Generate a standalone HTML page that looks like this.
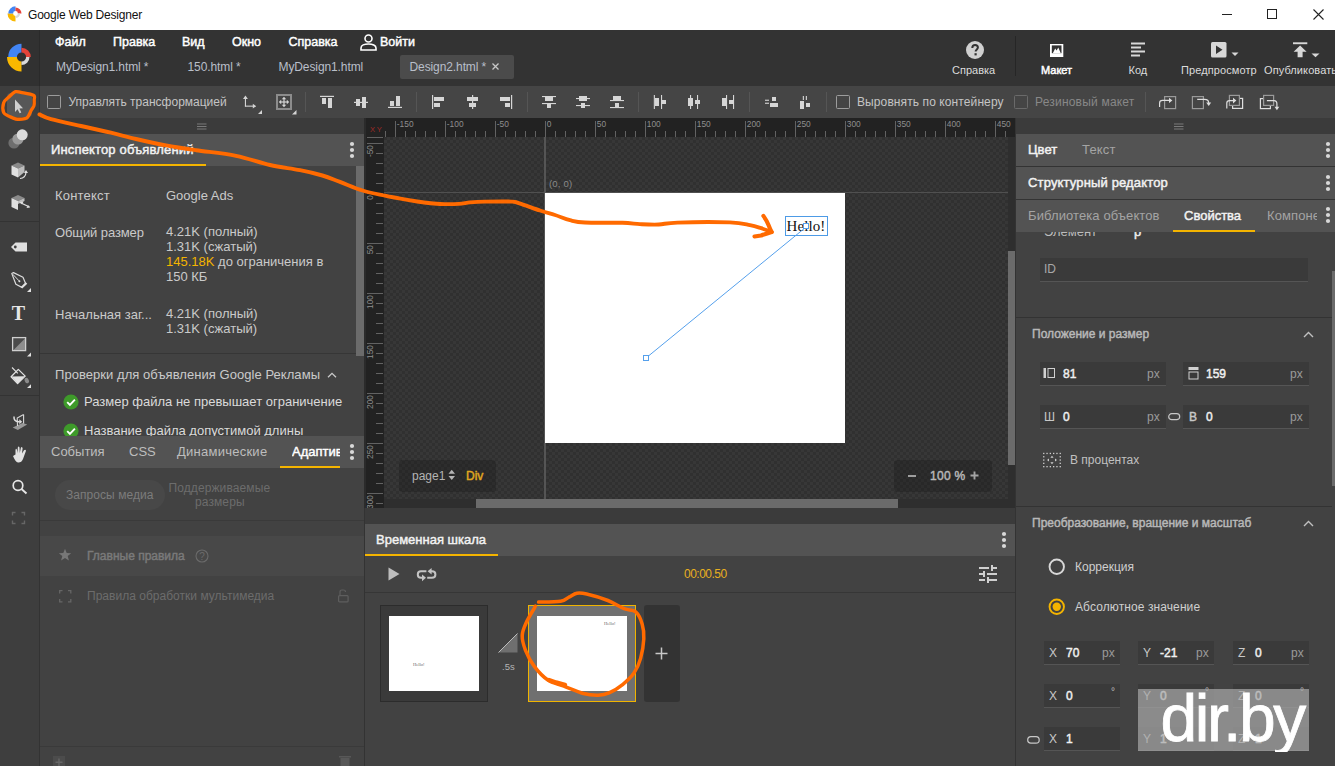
<!DOCTYPE html>
<html><head><meta charset="utf-8">
<style>
html,body{margin:0;padding:0}
body{width:1335px;height:766px;overflow:hidden;position:relative;background:#424242;font-family:"Liberation Sans",sans-serif;}
.a{position:absolute}
.t{position:absolute;white-space:nowrap;line-height:1}
svg{position:absolute;overflow:visible}
</style></head><body>

<!-- ===== TITLE BAR ===== -->
<div class="a" style="left:0;top:0;width:1335px;height:30px;background:#fff"></div>
<svg style="left:0;top:0" width="40" height="30">
  <path d="M7.5 13.5 A8 8 0 0 0 15.5 21.5 L15.5 15.9 A2.4 2.4 0 0 1 13.1 13.5 Z" fill="#f9b800"/>
  <path d="M8.3 13.5 A7.2 7.2 0 0 1 15.5 6.3 L15.5 11.1 A2.4 2.4 0 0 0 13.1 13.5 Z" fill="#4285f4"/>
  <path d="M15.5 7.5 A6 6 0 0 1 21.5 13.5 L17.9 13.5 A2.4 2.4 0 0 0 15.5 11.1 Z" fill="#e5433a"/>
  <path d="M20.1 13.5 A4.6 4.6 0 0 1 15.5 18.1 L15.5 15.9 A2.4 2.4 0 0 0 17.9 13.5 Z" fill="#d9d9d9"/>
</svg>
<div class="t" style="left:28px;top:8.8px;font-size:12px;color:#111;letter-spacing:-0.2px">Google Web Designer</div>
<div class="a" style="left:1222px;top:14px;width:10px;height:1px;background:#222"></div>
<div class="a" style="left:1267px;top:9px;width:8px;height:8px;border:1px solid #222"></div>
<svg style="left:1313px;top:9px" width="11" height="11"><path d="M0.5 0.5 L10.5 10.5 M10.5 0.5 L0.5 10.5" stroke="#222" stroke-width="1.1"/></svg>

<!-- ===== HEADER ===== -->
<div class="a" style="left:0;top:30px;width:1335px;height:56px;background:#333"></div>
<div class="a" style="left:0;top:30px;width:39px;height:56px;background:#313131;border-right:1px solid #2a2a2a"></div>


<svg style="left:0;top:30px" width="40" height="56" viewBox="0 30 40 56">
  <path d="M7.0 57 A14.5 14.5 0 0 0 21.5 71.5 L21.5 61.6 A4.6 4.6 0 0 1 16.9 57 Z" fill="#f9b800"/>
  <path d="M8.2 57 A13.3 13.3 0 0 1 21.5 43.7 L21.5 52.4 A4.6 4.6 0 0 0 16.9 57 Z" fill="#4285f4"/>
  <path d="M21.5 47.7 A9.3 9.3 0 0 1 30.8 57 L26.1 57 A4.6 4.6 0 0 0 21.5 52.4 Z" fill="#e5433a"/>
  <path d="M29.5 57 A8 8 0 0 1 21.5 65 L21.5 61.6 A4.6 4.6 0 0 0 26.1 57 Z" fill="#d9d9d9"/>
</svg>
<div class="t" style="left:55px;top:35.9px;font-size:12.5px;color:#fff;-webkit-text-stroke:0.45px currentColor">Файл</div>
<div class="t" style="left:113px;top:35.9px;font-size:12.5px;color:#fff;-webkit-text-stroke:0.45px currentColor">Правка</div>
<div class="t" style="left:182px;top:35.9px;font-size:12.5px;color:#fff;-webkit-text-stroke:0.45px currentColor">Вид</div>
<div class="t" style="left:232px;top:35.9px;font-size:12.5px;color:#fff;-webkit-text-stroke:0.45px currentColor">Окно</div>
<div class="t" style="left:288.5px;top:35.9px;font-size:12.5px;color:#fff;-webkit-text-stroke:0.45px currentColor">Справка</div>
<svg style="left:360px;top:34px" width="17" height="17" viewBox="0 0 17 17">
  <circle cx="8.5" cy="4.5" r="3.5" fill="none" stroke="#fff" stroke-width="1.6"/>
  <path d="M1 16 L1 14 C1 11.5 4.5 10 8.5 10 C12.5 10 16 11.5 16 14 L16 16 Z" fill="none" stroke="#fff" stroke-width="1.6"/>
</svg>
<div class="t" style="left:380px;top:35.9px;font-size:12.5px;color:#fff;-webkit-text-stroke:0.45px currentColor">Войти</div>

<div class="t" style="left:56px;top:60.8px;font-size:12px;color:#b9bfc9;letter-spacing:-0.1px">MyDesign1.html *</div>
<div class="t" style="left:187.5px;top:60.8px;font-size:12px;color:#b9bfc9;letter-spacing:-0.1px">150.html *</div>
<div class="t" style="left:278.5px;top:60.8px;font-size:12px;color:#b9bfc9;letter-spacing:-0.1px">MyDesign1.html</div>
<div class="a" style="left:400px;top:55px;width:114px;height:24px;background:#4b4b4b;border-radius:2px"></div>
<div class="t" style="left:409.5px;top:60.8px;font-size:12px;color:#b9bfc9;letter-spacing:-0.1px">Design2.html *</div>
<svg style="left:492px;top:63px" width="7" height="7"><path d="M0.5 0.5 L6.5 6.5 M6.5 0.5 L0.5 6.5" stroke="#c8c8c8" stroke-width="1.3"/></svg>

<!-- right header buttons -->
<svg style="left:966px;top:41px" width="18" height="18" viewBox="0 0 18 18">
  <circle cx="9" cy="9" r="9" fill="#d0d0d0"/>
  <path d="M6.3 7 C6.3 4.9 7.6 4 9.1 4 C10.7 4 11.9 5 11.9 6.5 C11.9 8.3 9.6 8.6 9.6 10.6" fill="none" stroke="#333" stroke-width="2"/>
  <rect x="8.5" y="12.2" width="2.2" height="2.2" fill="#333"/>
</svg>
<div class="t" style="left:952px;top:65.2px;font-size:11px;color:#dcdcdc;letter-spacing:0px">Справка</div>
<div class="a" style="left:1015px;top:36px;width:1px;height:40px;background:#262626"></div>
<svg style="left:1050px;top:44px" width="14" height="14" viewBox="0 0 14 14">
  <rect x="0" y="0" width="13.3" height="13" fill="#fff"/>
  <rect x="1.8" y="1.4" width="9.7" height="7.8" fill="#333"/>
  <path d="M2.8 9.2 L5.2 4.6 L6.6 6.4 L8.3 3.4 L10.8 9.2 Z" fill="#fff"/>
</svg>
<div class="t" style="left:1041px;top:65.2px;font-size:11px;color:#fff;-webkit-text-stroke:0.45px currentColor">Макет</div>
<svg style="left:1131px;top:42px" width="15" height="15" viewBox="0 0 15 15" fill="#d8d8d8">
  <rect x="0" y="0.5" width="14" height="2"/><rect x="0" y="4.5" width="10" height="2"/><rect x="0" y="8.5" width="14" height="2"/><rect x="0" y="12.5" width="9" height="2"/>
</svg>
<div class="t" style="left:1128.5px;top:65.2px;font-size:11px;color:#dcdcdc">Код</div>
<svg style="left:1211px;top:42px" width="30" height="16" viewBox="0 0 30 16">
  <rect x="0" y="0" width="15.5" height="15.5" rx="1.5" fill="#d8d8d8"/>
  <path d="M5 3.5 L11.5 7.75 L5 12 Z" fill="#333"/>
  <path d="M20.5 10.5 L27.5 10.5 L24 14 Z" fill="#d8d8d8"/>
</svg>
<div class="t" style="left:1181px;top:65.2px;font-size:11px;color:#dcdcdc;letter-spacing:0.1px">Предпросмотр</div>
<svg style="left:1293px;top:41.5px" width="30" height="17" viewBox="0 0 30 17" fill="#d8d8d8">
  <rect x="0" y="0.3" width="14.3" height="1.9"/>
  <path d="M7.1 3.5 L13.6 9.8 L9.6 9.8 L9.6 15.3 L4.6 15.3 L4.6 9.8 L0.6 9.8 Z"/>
  <path d="M18.5 11.5 L26.5 11.5 L22.5 15.3 Z"/>
</svg>
<div class="t" style="left:1264px;top:65.2px;font-size:11px;color:#dcdcdc;letter-spacing:0.1px">Опубликовать</div>

<!-- ===== TOOLBAR ===== -->
<div class="a" style="left:40px;top:86px;width:1295px;height:32px;background:#454545"></div>
<div class="a" style="left:0;top:86px;width:39px;height:680px;background:#3e3e3e;border-right:1px solid #333"></div>


<!-- toolbar content -->
<div class="a" style="left:47px;top:95px;width:12px;height:12px;border:1.6px solid #9c9c9c;border-radius:1.5px"></div>
<div class="t" style="left:68.5px;top:95.8px;font-size:12px;color:#c4c4c4">Управлять трансформацией</div>
<svg style="left:241px;top:94px" width="22" height="21" viewBox="0 0 22 21" fill="#d4d4d4">
  <rect x="3.9" y="4" width="1.1" height="8.5"/><path d="M4.45 1.5 L6.9 4.9 L2 4.9 Z"/>
  <rect x="3.9" y="11.6" width="8.5" height="1.1"/><path d="M15.2 12.15 L11.8 9.7 L11.8 14.6 Z"/>
  <path d="M21 16 L21 20 L17 20 Z"/>
</svg>
<svg style="left:276px;top:94px" width="22" height="21" viewBox="0 0 22 21">
  <rect x="1" y="1" width="14" height="14" fill="none" stroke="#8c8c8c" stroke-width="2"/>
  <g fill="#d4d4d4"><path d="M8 2.8 L10.2 5.2 L5.8 5.2 Z M8 13.2 L10.2 10.8 L5.8 10.8 Z M2.8 8 L5.2 5.8 L5.2 10.2 Z M13.2 8 L10.8 5.8 L10.8 10.2 Z"/><rect x="7.4" y="5" width="1.2" height="6"/><rect x="5" y="7.4" width="6" height="1.2"/></g>
  <path d="M20.5 16 L20.5 20.5 L16 20.5 Z" fill="#d4d4d4"/>
</svg>
<div class="a" style="left:305px;top:92px;width:1px;height:20px;background:#555"></div>
<svg style="left:0;top:0" width="1335" height="120" fill="#d6d6d6">
  <!-- align top -->
  <rect x="320" y="95.8" width="14" height="1.2"/><rect x="322" y="98" width="4" height="6"/><rect x="328" y="98" width="4" height="10"/>
  <!-- align middle -->
  <rect x="354" y="101.8" width="14" height="1.2"/><rect x="356" y="99" width="4" height="7"/><rect x="362" y="97" width="4" height="11"/>
  <!-- align bottom -->
  <rect x="388" y="106.8" width="14" height="1.2"/><rect x="390" y="101" width="4" height="5"/><rect x="396" y="96" width="4" height="10"/>
  <rect x="416" y="92" width="1" height="20" fill="#555"/>
  <!-- align left -->
  <rect x="432" y="95" width="1.2" height="14"/><rect x="434" y="97" width="10" height="4"/><rect x="434" y="103" width="6" height="4"/>
  <rect x="472" y="95" width="1.2" height="14"/><rect x="467" y="97" width="11" height="4"/><rect x="469" y="103" width="7" height="4"/>
  <rect x="511" y="95" width="1.2" height="14"/><rect x="500" y="97" width="10" height="4"/><rect x="505" y="103" width="5" height="4"/>
  <rect x="527" y="92" width="1" height="20" fill="#555"/>
  <!-- distribute vertical -->
  <rect x="542" y="96" width="14" height="1.1"/><rect x="545" y="97" width="8" height="4"/><rect x="542" y="103" width="14" height="1.1"/><rect x="547" y="104" width="4" height="4"/>
  <rect x="576" y="98" width="14" height="1.1"/><rect x="579" y="96" width="8" height="5"/><rect x="576" y="105" width="14" height="1.1"/><rect x="581" y="103" width="4" height="5"/>
  <rect x="613" y="96" width="8" height="4"/><rect x="610" y="100" width="14" height="1.1"/><rect x="615" y="103" width="4" height="4"/><rect x="610" y="107" width="14" height="1.1"/>
  <rect x="638" y="92" width="1" height="20" fill="#555"/>
  <!-- distribute horizontal -->
  <rect x="653.8" y="95" width="1.1" height="14"/><rect x="655" y="98" width="4" height="8"/><rect x="661" y="95" width="1.1" height="14"/><rect x="662" y="100" width="4" height="4"/>
  <rect x="688" y="98" width="5" height="8"/><rect x="690" y="95" width="1.1" height="14"/><rect x="695" y="100" width="5" height="4"/><rect x="697" y="95" width="1.1" height="14"/>
  <rect x="722" y="98" width="4" height="8"/><rect x="726" y="95" width="1.1" height="14"/><rect x="729" y="100" width="4" height="4"/><rect x="733" y="95" width="1.1" height="14"/>
  <rect x="749" y="92" width="1" height="20" fill="#555"/>
  <!-- spacing -->
  <rect x="765" y="99.7" width="4" height="1.1"/><rect x="765" y="102.7" width="4" height="1.1"/><rect x="772" y="97" width="4" height="4"/><rect x="770" y="103" width="8" height="4"/>
  <rect x="802.8" y="96" width="1.1" height="4"/><rect x="805.8" y="96" width="1.1" height="4"/><rect x="800" y="101" width="4" height="8"/><rect x="806" y="103" width="4" height="4"/>
  <rect x="826" y="92" width="1" height="20" fill="#555"/>
  <rect x="1145" y="92" width="1" height="20" fill="#555"/>
</svg>
<div class="a" style="left:836px;top:95px;width:12px;height:12px;border:1.6px solid #9c9c9c;border-radius:1.5px"></div>
<div class="t" style="left:857px;top:95.8px;font-size:12px;color:#c4c4c4;letter-spacing:0.1px">Выровнять по контейнеру</div>
<div class="a" style="left:1014px;top:95px;width:12px;height:12px;border:1.6px solid #6a6a6a;border-radius:1.5px"></div>
<div class="t" style="left:1035px;top:95.8px;font-size:12px;color:#888;letter-spacing:0.2px">Резиновый макет</div>
<svg style="left:0;top:0" width="1335" height="120" fill="none" stroke-width="1.2">
  <rect x="1164.6" y="96.6" width="11" height="12" stroke="#9a9a9a"/>
  <path d="M1159.6 107 L1159.6 103 Q1159.6 100.4 1162.5 100.4 L1169.5 100.4" stroke="#dedede"/>
  <path d="M1169 97.8 L1172.4 100.4 L1169 103 Z" fill="#dedede" stroke="none"/>
  <rect x="1192.4" y="96.6" width="11" height="12" stroke="#9a9a9a"/>
  <path d="M1197.2 99.4 L1204.5 99.4 Q1208.7 99.4 1208.7 103" stroke="#dedede"/>
  <path d="M1206.2 102.6 L1211.2 102.6 L1208.7 106 Z" fill="#dedede" stroke="none"/>
  <rect x="1232.6" y="98.4" width="10" height="10" stroke="#dedede"/>
  <rect x="1229.4" y="95.4" width="10" height="10" fill="#444" stroke="#9a9a9a"/>
  <path d="M1226.8 108.5 L1226.8 103 Q1226.8 100.6 1229.5 100.6 L1233.5 100.6" stroke="#dedede"/>
  <path d="M1233 97.8 L1236.4 100.6 L1233 103.4 Z" fill="#dedede" stroke="none"/>
  <rect x="1260.4" y="98.6" width="10" height="10" stroke="#dedede"/>
  <rect x="1263.6" y="95.4" width="10" height="10" fill="#444" stroke="#9a9a9a"/>
  <path d="M1266.9 100.6 L1274 100.6 Q1276.9 100.6 1276.9 104 L1276.9 107.5" stroke="#dedede"/>
  <path d="M1274.5 106.8 L1279.3 106.8 L1276.9 110.2 Z" fill="#dedede" stroke="none"/>
</svg>


<!-- ===== LEFT STRIP ICONS ===== -->
<div class="a" style="left:7px;top:93px;width:25px;height:24px;background:#575757;border-radius:4px"></div>
<svg style="left:0;top:86px" width="40" height="450" viewBox="0 86 40 450">
  <path d="M15 99.5 L15 112 L17.6 109.3 L19.6 113.2 L21.3 112.4 L19.4 108.6 L23 108.3 Z" fill="#d0d0d0"/>
  <circle cx="14" cy="143" r="5.6" fill="#6e6e6e"/>
  <circle cx="18" cy="139" r="5.6" fill="#9a9a9a"/>
  <circle cx="22.2" cy="134.8" r="5.5" fill="#dcdcdc"/>
  <!-- cube rotate -->
  <path d="M11.5 165.5 L18 162.5 L24.5 165.5 L18 168.5 Z" fill="#8a8a8a"/>
  <path d="M11.5 165.5 L18 168.5 L18 177.5 L11.5 174.5 Z" fill="#e0e0e0"/>
  <path d="M18 168.5 L24.5 165.5 L24.5 172 L18 177.5 Z" fill="#bdbdbd"/>
  <path d="M20 178.5 Q25.5 178 26 172.5" fill="none" stroke="#e0e0e0" stroke-width="1.2"/><path d="M24 173 L26 170 L28 173 Z" fill="#e0e0e0"/>
  <!-- cube move -->
  <path d="M11.5 198 L18 195 L24.5 198 L18 201 Z" fill="#8a8a8a"/>
  <path d="M11.5 198 L18 201 L18 210 L11.5 207 Z" fill="#e0e0e0"/>
  <path d="M18 201 L24.5 198 L24.5 201 L18 204 Z" fill="#bdbdbd"/>
  <path d="M20 202.5 L29.5 207" stroke="#e0e0e0" stroke-width="1.3"/><path d="M20 202 L23.5 201.5 L22 204.5 Z M30 207.5 L26.5 208 L28 205 Z" fill="#e0e0e0"/>
  <rect x="0" y="221" width="39" height="1" fill="#333"/>
  <!-- tag -->
  <path d="M11 247 L15.5 242.5 L27 242.5 L27 251.5 L15.5 251.5 Z" fill="#e0e0e0"/><circle cx="15.3" cy="247" r="1.4" fill="#3e3e3e"/>
  <!-- pen -->
  <path d="M11.8 273.6 L13.5 272.6 L23 277.2 L25.6 283.4 L21.9 287.4 L15.9 284.3 Z" fill="none" stroke="#dcdcdc" stroke-width="1.2" stroke-linejoin="round"/>
  <path d="M21.5 287.7 L26.5 283" stroke="#e0e0e0" stroke-width="2.2"/>
  <path d="M12.7 274.2 L19 280.8" stroke="#dcdcdc" stroke-width="1"/>
  <circle cx="19.4" cy="281.3" r="1" fill="#e0e0e0"/>
  <path d="M31 288 L31 292 L27 292 Z" fill="#e0e0e0"/>
  <!-- T -->
  <text x="18.5" y="319.5" font-family="Liberation Serif" font-weight="bold" font-size="20" fill="#e6e6e6" text-anchor="middle">T</text>
  <!-- rect -->
  <rect x="12.6" y="337.6" width="13" height="13" fill="#4a4a4a" stroke="#cfcfcf" stroke-width="1.3"/>
  <path d="M25 338.5 L25 350 L13.5 350 Z" fill="#8e8e8e"/>
  <path d="M31 352.5 L31 356.5 L27 356.5 Z" fill="#e0e0e0"/>
  <!-- bucket -->
  <path d="M11.1 376.7 L18.3 369.4 L25.2 376.1 L17.6 383.5 Z" fill="none" stroke="#e2e2e2" stroke-width="1.3" stroke-linejoin="round"/>
  <path d="M11.6 376.4 L25 376.2 L17.6 383.2 Z" fill="#e2e2e2"/>
  <path d="M12 367.5 L17.8 373.4" stroke="#e0e0e0" stroke-width="1.1"/>
  <ellipse cx="26.8" cy="380.6" rx="2" ry="2.8" transform="rotate(-25 26.8 380.6)" fill="#8a8a8a"/>
  <path d="M31 384.3 L31 388 L27 388 Z" fill="#e0e0e0"/>
  <rect x="0" y="395" width="39" height="1" fill="#333"/>
  <!-- 3d -->
  <path d="M12.7 427.6 L17.8 429.9 L27.2 424.5 L22.5 422.9 Z" fill="#999"/>
  <path d="M23.6 414.5 L23.6 423.5 M23.6 414.5 L17.2 418 L17.5 426" fill="none" stroke="#d8d8d8" stroke-width="1.1"/>
  <path d="M14 416.5 Q13.6 421.5 18.5 421.7 L19.8 421.7" fill="none" stroke="#dedede" stroke-width="1.5"/>
  <path d="M19.3 419.2 L22.2 421.7 L19.3 424.2 Z" fill="#dedede"/>
  <!-- hand -->
  <path d="M13 456 L15.5 454.5 L15.5 450 Q16 447.5 17 450 L17.5 453 L17.8 447.5 Q18.7 445.5 19.5 447.5 L19.8 453 L20.8 448 Q21.8 446 22.6 448.3 L22 453.5 L24 450.3 Q25.5 449 26 450.8 L23 459 Q21.5 462.8 18 462.5 Q15.5 462 13 456 Z" fill="#e2e2e2"/>
  <!-- search -->
  <circle cx="18" cy="485.5" r="4.8" fill="none" stroke="#e6e6e6" stroke-width="1.7"/>
  <path d="M21.5 489 L26.5 493.5" stroke="#e6e6e6" stroke-width="1.9"/>
  <!-- dashed frame -->
  <path d="M12.5 515.5 L12.5 512.5 L15.5 512.5 M21.5 512.5 L24.5 512.5 L24.5 515.5 M24.5 520.5 L24.5 523.5 L21.5 523.5 M15.5 523.5 L12.5 523.5 L12.5 520.5" fill="none" stroke="#666" stroke-width="1.4"/>
</svg>

<!-- ===== LEFT PANEL ===== -->
<div class="a" style="left:40px;top:118px;width:324px;height:16px;background:#3b3b3b"></div>
<svg style="left:197px;top:123px" width="10" height="7" fill="#7a7a7a"><rect y="0.5" width="9.5" height="1"/><rect y="3" width="9.5" height="1"/><rect y="5.5" width="9.5" height="1"/></svg>
<div class="a" style="left:40px;top:134px;width:324px;height:32px;background:#535353"></div>
<div class="a" style="left:40px;top:164px;width:166px;height:2px;background:#f4b400"></div>
<div class="t" style="left:51px;top:143px;font-size:13px;color:#f2f2f2;letter-spacing:0.15px;-webkit-text-stroke:0.45px currentColor">Инспектор объявлений</div>
<svg style="left:349px;top:141px" width="6" height="18" fill="#d8d8d8"><circle cx="3" cy="3" r="2.1"/><circle cx="3" cy="9" r="2.1"/><circle cx="3" cy="15" r="2.1"/></svg>
<div class="a" style="left:356px;top:166px;width:8px;height:190px;background:#6b6b6b"></div>

<div class="t" style="left:55px;top:189px;font-size:13px;color:#cacaca;letter-spacing:0.2px">Контекст</div>
<div class="t" style="left:166px;top:189px;font-size:13px;color:#cacaca">Google Ads</div>
<div class="t" style="left:55px;top:226px;font-size:13px;color:#cacaca;letter-spacing:-0.1px">Общий размер</div>
<div class="a" style="left:166px;top:226px;font-size:13px;color:#cacaca;line-height:15px;white-space:nowrap">
  <div style="margin-top:-2px">4.21K (полный)</div><div>1.31K (сжатый)</div><div><span style="color:#f4b400">145.18K</span> до ограничения в</div><div>150 КБ</div>
</div>
<div class="t" style="left:55px;top:308px;font-size:13px;color:#cacaca">Начальная заг...</div>
<div class="a" style="left:166px;top:306px;font-size:13px;color:#cacaca;line-height:15px;white-space:nowrap"><div>4.21K (полный)</div><div>1.31K (сжатый)</div></div>
<div class="a" style="left:40px;top:353px;width:316px;height:1px;background:#363636"></div>
<div class="t" style="left:55px;top:368px;font-size:13px;color:#cacaca;letter-spacing:0.05px">Проверки для объявления Google Рекламы</div>
<svg style="left:327px;top:372px" width="10" height="6"><path d="M1 5.3 L5 1.3 L9 5.3" fill="none" stroke="#cacaca" stroke-width="1.3"/></svg>
<svg style="left:63px;top:394px" width="16" height="45">
  <circle cx="8" cy="8" r="7.6" fill="#3e9a2a"/><path d="M4.2 8.2 L6.9 10.9 L11.9 5.6" fill="none" stroke="#fff" stroke-width="1.9"/>
  <circle cx="8" cy="37" r="7.6" fill="#3e9a2a"/><path d="M4.2 37.2 L6.9 39.9 L11.9 34.6" fill="none" stroke="#fff" stroke-width="1.9"/>
</svg>
<div class="t" style="left:84px;top:395px;font-size:13px;color:#dadada">Размер файла не превышает ограничение</div>
<div class="t" style="left:84px;top:424px;font-size:13px;color:#dadada">Название файла допустимой длины</div>

<!-- lower tabs -->
<div class="a" style="left:40px;top:436px;width:324px;height:32px;background:#535353"></div>
<div class="t" style="left:51px;top:445px;font-size:13px;color:#bdbdbd">События</div>
<div class="t" style="left:129px;top:445px;font-size:13px;color:#bdbdbd">CSS</div>
<div class="t" style="left:177px;top:445px;font-size:13px;color:#bdbdbd;letter-spacing:0.25px">Динамические</div>
<div class="a" style="left:292px;top:440px;width:48px;height:24px;overflow:hidden"><div class="t" style="left:0;top:5px;font-size:13px;color:#fff;-webkit-text-stroke:0.45px currentColor">Адаптивный</div></div>
<div class="a" style="left:280px;top:466px;width:60px;height:2px;background:#f4b400"></div>
<svg style="left:349px;top:443px" width="6" height="18" fill="#d8d8d8"><circle cx="3" cy="3" r="2.1"/><circle cx="3" cy="9" r="2.1"/><circle cx="3" cy="15" r="2.1"/></svg>

<div class="a" style="left:55px;top:480px;width:110px;height:30px;background:#484848;border-radius:15px"></div>
<div class="t" style="left:66px;top:488.5px;font-size:12px;color:#7c7c7c;letter-spacing:0.05px">Запросы медиа</div>
<div class="t" style="left:168.5px;top:482px;font-size:12px;color:#6c6c6c;letter-spacing:0.1px">Поддерживаемые</div>
<div class="t" style="left:195px;top:495.5px;font-size:12px;color:#6c6c6c;letter-spacing:0.1px">размеры</div>
<div class="a" style="left:40px;top:520px;width:324px;height:1px;background:#3a3a3a"></div>
<div class="a" style="left:40px;top:536px;width:324px;height:40px;background:#484848"></div>
<svg style="left:58px;top:548px" width="14" height="14"><path d="M7 0.8 L8.7 5 L13.2 5.2 L9.7 8 L10.9 12.4 L7 9.9 L3.1 12.4 L4.3 8 L0.8 5.2 L5.3 5 Z" fill="#777"/></svg>
<div class="t" style="left:87px;top:550px;font-size:12px;color:#7a7a7a;-webkit-text-stroke:0.45px currentColor">Главные правила</div>
<svg style="left:195px;top:549px" width="14" height="14"><circle cx="7" cy="7" r="6" fill="none" stroke="#6a6a6a" stroke-width="1.1"/><text x="7" y="10.8" font-size="10" font-family="Liberation Sans" fill="#6a6a6a" text-anchor="middle">?</text></svg>
<svg style="left:59px;top:590px" width="13" height="13"><path d="M0.7 3.5 L0.7 0.7 L3.5 0.7 M9 0.7 L11.8 0.7 L11.8 3.5 M11.8 9 L11.8 11.8 L9 11.8 M3.5 11.8 L0.7 11.8 L0.7 9" fill="none" stroke="#666" stroke-width="1.3"/></svg>
<div class="t" style="left:87px;top:590px;font-size:12px;color:#6c6c6c;letter-spacing:0.02px">Правила обработки мультимедиа</div>
<svg style="left:337px;top:589px" width="13" height="14"><path d="M3 6 L3 3 Q3 1 5 1 L6.5 1 Q8.5 1 8.5 3" fill="none" stroke="#5e5e5e" stroke-width="1.2"/><rect x="1.6" y="6.6" width="9.5" height="6.3" rx="1" fill="none" stroke="#5e5e5e" stroke-width="1.2"/></svg>
<div class="a" style="left:40px;top:746px;width:324px;height:1px;background:#3a3a3a"></div>
<div class="a" style="left:53px;top:756px;width:12px;height:12px;background:#4c4c4c"></div>
<svg style="left:53px;top:756px" width="12" height="12"><path d="M6 2.5 L6 10 M2.5 6.2 L9.5 6.2" stroke="#666" stroke-width="1.4"/></svg>
<svg style="left:339px;top:755px" width="12" height="12" fill="#585858"><rect x="0" y="1" width="12" height="1.5"/><rect x="1.5" y="3" width="9" height="9"/></svg>
<div class="a" style="left:364px;top:118px;width:1px;height:648px;background:#333"></div>


<!-- ===== CANVAS ===== -->
<div class="a" style="left:364px;top:118px;width:2px;height:390px;background:#2b2b2b"></div>
<div class="a" style="left:366px;top:118px;width:649px;height:19px;background:#222"></div>
<div class="a" style="left:366px;top:137px;width:18px;height:371px;background:#222"></div>
<div class="a" style="left:384px;top:137px;width:624px;height:362px;background-color:#303030;background-image:linear-gradient(45deg,#373737 25%,transparent 25%,transparent 75%,#373737 75%),linear-gradient(45deg,#373737 25%,transparent 25%,transparent 75%,#373737 75%);background-size:6px 6px;background-position:0 0,3px 3px"></div>
<div class="t" style="left:370px;top:125.9px;font-size:7.6px;color:#a02a26;letter-spacing:1.6px">XY</div>
<svg style="left:0;top:0" width="1335" height="520" font-family="Liberation Sans" font-size="8.4" >
<g fill="#626262">
<rect x="385" y="131" width="1" height="6"/>
<rect x="395" y="121" width="1" height="16"/>
<text x="396.8" y="127.3" fill="#8e8e8e">-150</text>
<rect x="405" y="131" width="1" height="6"/>
<rect x="415" y="131" width="1" height="6"/>
<rect x="425" y="131" width="1" height="6"/>
<rect x="435" y="131" width="1" height="6"/>
<rect x="445" y="121" width="1" height="16"/>
<text x="446.8" y="127.3" fill="#8e8e8e">-100</text>
<rect x="455" y="131" width="1" height="6"/>
<rect x="465" y="131" width="1" height="6"/>
<rect x="475" y="131" width="1" height="6"/>
<rect x="485" y="131" width="1" height="6"/>
<rect x="495" y="121" width="1" height="16"/>
<text x="496.8" y="127.3" fill="#8e8e8e">-50</text>
<rect x="505" y="131" width="1" height="6"/>
<rect x="515" y="131" width="1" height="6"/>
<rect x="525" y="131" width="1" height="6"/>
<rect x="535" y="131" width="1" height="6"/>
<rect x="545" y="121" width="1" height="16"/>
<text x="546.8" y="127.3" fill="#8e8e8e">0</text>
<rect x="555" y="131" width="1" height="6"/>
<rect x="565" y="131" width="1" height="6"/>
<rect x="575" y="131" width="1" height="6"/>
<rect x="585" y="131" width="1" height="6"/>
<rect x="595" y="121" width="1" height="16"/>
<text x="596.8" y="127.3" fill="#8e8e8e">50</text>
<rect x="605" y="131" width="1" height="6"/>
<rect x="615" y="131" width="1" height="6"/>
<rect x="625" y="131" width="1" height="6"/>
<rect x="635" y="131" width="1" height="6"/>
<rect x="645" y="121" width="1" height="16"/>
<text x="646.8" y="127.3" fill="#8e8e8e">100</text>
<rect x="655" y="131" width="1" height="6"/>
<rect x="665" y="131" width="1" height="6"/>
<rect x="675" y="131" width="1" height="6"/>
<rect x="685" y="131" width="1" height="6"/>
<rect x="695" y="121" width="1" height="16"/>
<text x="696.8" y="127.3" fill="#8e8e8e">150</text>
<rect x="705" y="131" width="1" height="6"/>
<rect x="715" y="131" width="1" height="6"/>
<rect x="725" y="131" width="1" height="6"/>
<rect x="735" y="131" width="1" height="6"/>
<rect x="745" y="121" width="1" height="16"/>
<text x="746.8" y="127.3" fill="#8e8e8e">200</text>
<rect x="755" y="131" width="1" height="6"/>
<rect x="765" y="131" width="1" height="6"/>
<rect x="775" y="131" width="1" height="6"/>
<rect x="785" y="131" width="1" height="6"/>
<rect x="795" y="121" width="1" height="16"/>
<text x="796.8" y="127.3" fill="#8e8e8e">250</text>
<rect x="805" y="131" width="1" height="6"/>
<rect x="815" y="131" width="1" height="6"/>
<rect x="825" y="131" width="1" height="6"/>
<rect x="835" y="131" width="1" height="6"/>
<rect x="845" y="121" width="1" height="16"/>
<text x="846.8" y="127.3" fill="#8e8e8e">300</text>
<rect x="855" y="131" width="1" height="6"/>
<rect x="865" y="131" width="1" height="6"/>
<rect x="875" y="131" width="1" height="6"/>
<rect x="885" y="131" width="1" height="6"/>
<rect x="895" y="121" width="1" height="16"/>
<text x="896.8" y="127.3" fill="#8e8e8e">350</text>
<rect x="905" y="131" width="1" height="6"/>
<rect x="915" y="131" width="1" height="6"/>
<rect x="925" y="131" width="1" height="6"/>
<rect x="935" y="131" width="1" height="6"/>
<rect x="945" y="121" width="1" height="16"/>
<text x="946.8" y="127.3" fill="#8e8e8e">400</text>
<rect x="955" y="131" width="1" height="6"/>
<rect x="965" y="131" width="1" height="6"/>
<rect x="975" y="131" width="1" height="6"/>
<rect x="985" y="131" width="1" height="6"/>
<rect x="995" y="121" width="1" height="16"/>
<text x="996.8" y="127.3" fill="#8e8e8e">450</text>
<rect x="1005" y="131" width="1" height="6"/>
<rect x="367" y="143" width="16" height="1"/>
<text transform="translate(373.3 145) rotate(-90)" text-anchor="end" fill="#8e8e8e">-50</text>
<rect x="376" y="153" width="7" height="1"/>
<rect x="376" y="163" width="7" height="1"/>
<rect x="376" y="173" width="7" height="1"/>
<rect x="376" y="183" width="7" height="1"/>
<rect x="367" y="193" width="16" height="1"/>
<text transform="translate(373.3 195) rotate(-90)" text-anchor="end" fill="#8e8e8e">0</text>
<rect x="376" y="203" width="7" height="1"/>
<rect x="376" y="213" width="7" height="1"/>
<rect x="376" y="223" width="7" height="1"/>
<rect x="376" y="233" width="7" height="1"/>
<rect x="367" y="243" width="16" height="1"/>
<text transform="translate(373.3 245) rotate(-90)" text-anchor="end" fill="#8e8e8e">50</text>
<rect x="376" y="253" width="7" height="1"/>
<rect x="376" y="263" width="7" height="1"/>
<rect x="376" y="273" width="7" height="1"/>
<rect x="376" y="283" width="7" height="1"/>
<rect x="367" y="293" width="16" height="1"/>
<text transform="translate(373.3 295) rotate(-90)" text-anchor="end" fill="#8e8e8e">100</text>
<rect x="376" y="303" width="7" height="1"/>
<rect x="376" y="313" width="7" height="1"/>
<rect x="376" y="323" width="7" height="1"/>
<rect x="376" y="333" width="7" height="1"/>
<rect x="367" y="343" width="16" height="1"/>
<text transform="translate(373.3 345) rotate(-90)" text-anchor="end" fill="#8e8e8e">150</text>
<rect x="376" y="353" width="7" height="1"/>
<rect x="376" y="363" width="7" height="1"/>
<rect x="376" y="373" width="7" height="1"/>
<rect x="376" y="383" width="7" height="1"/>
<rect x="367" y="393" width="16" height="1"/>
<text transform="translate(373.3 395) rotate(-90)" text-anchor="end" fill="#8e8e8e">200</text>
<rect x="376" y="403" width="7" height="1"/>
<rect x="376" y="413" width="7" height="1"/>
<rect x="376" y="423" width="7" height="1"/>
<rect x="376" y="433" width="7" height="1"/>
<rect x="367" y="443" width="16" height="1"/>
<text transform="translate(373.3 445) rotate(-90)" text-anchor="end" fill="#8e8e8e">250</text>
<rect x="376" y="453" width="7" height="1"/>
<rect x="376" y="463" width="7" height="1"/>
<rect x="376" y="473" width="7" height="1"/>
<rect x="376" y="483" width="7" height="1"/>
<rect x="367" y="493" width="16" height="1"/>
<text transform="translate(373.3 495) rotate(-90)" text-anchor="end" fill="#8e8e8e">300</text>
<rect x="376" y="503" width="7" height="1"/>
<rect x="367" y="137" width="16" height="1"/>
</g>
</svg>
<div class="a" style="left:384px;top:192px;width:624px;height:1px;background:#505050"></div>
<div class="a" style="left:544px;top:137px;width:1.5px;height:362px;background:#555"></div>
<div class="t" style="left:549px;top:179.3px;font-size:9.6px;color:#8a8a8a;letter-spacing:0.15px">(0, 0)</div>
<div class="a" style="left:545px;top:193px;width:300px;height:250px;background:#fff"></div>
<div class="t" style="left:786.5px;top:218.6px;font-size:15px;font-family:'Liberation Serif',serif;color:#111;letter-spacing:0.1px">Hello!</div>
<div class="a" style="left:785px;top:216px;width:41px;height:17.5px;border:1px solid #4d9be6"></div>
<svg style="left:0;top:0" width="1335" height="520">
  <path d="M805.5 227.5 L646 358" stroke="#55a0ec" stroke-width="1"/>
  <rect x="643.5" y="355.5" width="5" height="5" fill="#fff" stroke="#55a0ec" stroke-width="1"/>
  <rect x="803.5" y="223.5" width="5" height="5" fill="#fff" stroke="#55a0ec" stroke-width="1"/>
</svg>
<div class="a" style="left:399px;top:460px;width:97px;height:32px;background:rgba(20,20,20,0.28);border-radius:4px"></div>
<div class="t" style="left:412px;top:469.8px;font-size:12px;color:#b4b4b4">page1</div>
<svg style="left:448px;top:469px" width="8" height="12" fill="#b4b4b4"><path d="M0.5 4.8 L3.75 0.8 L7 4.8 Z M0.5 7 L3.75 11 L7 7 Z"/></svg>
<div class="t" style="left:466px;top:469.8px;font-size:12px;color:#e0a820;-webkit-text-stroke:0.45px currentColor">Div</div>
<div class="a" style="left:894px;top:460px;width:98px;height:32px;background:rgba(20,20,20,0.28);border-radius:4px"></div>
<div class="a" style="left:908px;top:474.5px;width:8px;height:2px;background:#9e9e9e"></div>
<div class="t" style="left:930px;top:469.8px;font-size:12px;color:#b8b8b8;letter-spacing:0.3px;-webkit-text-stroke:0.45px currentColor">100 %</div>
<svg style="left:970px;top:471px" width="9" height="9"><path d="M4.5 0.5 L4.5 8.5 M0.5 4.5 L8.5 4.5" stroke="#a4a4a4" stroke-width="1.9"/></svg>
<div class="a" style="left:1008px;top:137px;width:7px;height:371px;background:#2e2e2e"></div>
<div class="a" style="left:1008px;top:251px;width:7px;height:214px;background:#6b6b6b"></div>
<div class="a" style="left:384px;top:499px;width:624px;height:9px;background:#2e2e2e"></div>
<div class="a" style="left:476px;top:499px;width:422px;height:9px;background:#6b6b6b"></div>

<!-- ===== TIMELINE ===== -->
<div class="a" style="left:365px;top:508px;width:650px;height:16px;background:#3b3b3b"></div>
<div class="a" style="left:365px;top:524px;width:650px;height:32px;background:#535353"></div>
<div class="a" style="left:365px;top:554px;width:133px;height:2px;background:#f4b400"></div>
<div class="t" style="left:376px;top:533px;font-size:13px;color:#f2f2f2;-webkit-text-stroke:0.45px currentColor">Временная шкала</div>
<svg style="left:1001px;top:531px" width="6" height="18" fill="#d8d8d8"><circle cx="3" cy="3" r="2.1"/><circle cx="3" cy="9" r="2.1"/><circle cx="3" cy="15" r="2.1"/></svg>
<div class="a" style="left:365px;top:556px;width:650px;height:36px;background:#424242"></div>
<div class="a" style="left:365px;top:592px;width:650px;height:1px;background:#363636"></div>
<svg style="left:388px;top:567px" width="12" height="14"><path d="M0.5 0.5 L11.5 7 L0.5 13.5 Z" fill="#bdbdbd"/></svg>
<svg style="left:0;top:0" width="1335" height="600" fill="none" stroke="#c4c4c4" stroke-width="2">
  <path d="M426.4 571.2 L421 571.2 Q417.8 571.2 417.8 574.4 Q417.8 577.7 421 577.7 L422.5 577.7"/>
  <path d="M422 574.4 L426 577.8 L422 581.2 Z" fill="#c4c4c4" stroke="none"/>
  <path d="M427.2 577.8 L432 577.8 Q435.4 577.8 435.4 574.4 Q435.4 571.2 432 571.2 L430.5 571.2"/>
  <path d="M431.6 567.9 L427.6 571.2 L431.6 574.5 Z" fill="#c4c4c4" stroke="none"/>
</svg>
<div class="t" style="left:684px;top:567.6px;font-size:12px;color:#e8b020;letter-spacing:-0.5px">00:00.50</div>
<svg style="left:0;top:0" width="1335" height="600" fill="#cfcfcf">
  <rect x="979" y="567" width="10" height="2"/><rect x="991" y="565" width="2" height="6"/><rect x="993" y="567" width="4" height="2"/>
  <rect x="979" y="573" width="4" height="2"/><rect x="983" y="571" width="2" height="6"/><rect x="987" y="573" width="10" height="2"/>
  <rect x="979" y="579" width="6" height="2"/><rect x="987" y="577" width="2" height="6"/><rect x="989" y="579" width="8" height="2"/>
</svg>
<div class="a" style="left:380px;top:605px;width:106px;height:95px;background:#3a3a3a;border:1px solid #2c2c2c"></div>
<div class="a" style="left:389px;top:616px;width:90px;height:75px;background:#fff"></div>
<div class="t" style="left:413px;top:663px;font-size:4.5px;font-family:'Liberation Serif',serif;color:#666">Hello!</div>
<svg style="left:498px;top:632px" width="22" height="22"><path d="M0.5 20.5 L19.5 1.5 L19.5 20.5 Z" fill="#6f6f6f"/><path d="M0.5 20.5 L19.5 1.5" stroke="#bbb" stroke-width="1"/></svg>
<div class="t" style="left:502px;top:661.5px;font-size:9.5px;color:#b4b4b4">.5s</div>
<div class="a" style="left:528px;top:605px;width:106px;height:95px;background:#707070;border:1px solid #f0b400"></div>
<div class="a" style="left:537px;top:616px;width:90px;height:75px;background:#fff"></div>
<div class="t" style="left:604px;top:622px;font-size:4.5px;font-family:'Liberation Serif',serif;color:#666">Hello!</div>
<div class="a" style="left:644px;top:605px;width:36px;height:97px;background:#333;border-radius:3px"></div>
<svg style="left:655px;top:647px" width="13" height="13"><path d="M6.5 0.5 L6.5 12.5 M0.5 6.5 L12.5 6.5" stroke="#c8c8c8" stroke-width="1.5"/></svg>
<div class="a" style="left:1015px;top:118px;width:1px;height:648px;background:#333"></div>


<!-- ===== RIGHT PANEL ===== -->
<div class="a" style="left:1016px;top:118px;width:319px;height:16px;background:#3b3b3b"></div>
<svg style="left:1174px;top:123px" width="10" height="7" fill="#7a7a7a"><rect y="0.5" width="9.5" height="1"/><rect y="3" width="9.5" height="1"/><rect y="5.5" width="9.5" height="1"/></svg>
<div class="a" style="left:1016px;top:134px;width:319px;height:32px;background:#535353"></div>
<div class="a" style="left:1016px;top:166px;width:319px;height:1px;background:#333"></div>
<div class="a" style="left:1016px;top:167px;width:319px;height:32px;background:#535353"></div>
<div class="a" style="left:1016px;top:199px;width:319px;height:1px;background:#333"></div>
<div class="a" style="left:1016px;top:200px;width:319px;height:32px;background:#535353"></div>
<div class="t" style="left:1028px;top:143px;font-size:13px;color:#f2f2f2;-webkit-text-stroke:0.45px currentColor">Цвет</div>
<div class="t" style="left:1082px;top:143px;font-size:13px;color:#a4a4a4;letter-spacing:0.2px">Текст</div>
<div class="t" style="left:1028px;top:176px;font-size:13px;color:#f2f2f2;letter-spacing:0.15px;-webkit-text-stroke:0.45px currentColor">Структурный редактор</div>
<div class="t" style="left:1028px;top:208.5px;font-size:13px;color:#a4a4a4;letter-spacing:0.1px">Библиотека объектов</div>
<div class="t" style="left:1184px;top:208.5px;font-size:13px;color:#f2f2f2;-webkit-text-stroke:0.45px currentColor">Свойства</div>
<div class="a" style="left:1267px;top:204px;width:50px;height:22px;overflow:hidden"><div class="t" style="left:0;top:4.5px;font-size:13px;color:#a4a4a4;letter-spacing:0.1px">Компоненты</div></div>
<div class="a" style="left:1173px;top:230px;width:82px;height:2px;background:#f4b400"></div>
<svg style="left:1325px;top:141px" width="6" height="84" fill="#d8d8d8">
  <circle cx="3" cy="3" r="2.1"/><circle cx="3" cy="9" r="2.1"/><circle cx="3" cy="15" r="2.1"/>
  <circle cx="3" cy="36" r="2.1"/><circle cx="3" cy="42" r="2.1"/><circle cx="3" cy="48" r="2.1"/>
  <circle cx="3" cy="68" r="2.1"/><circle cx="3" cy="74" r="2.1"/><circle cx="3" cy="80" r="2.1"/>
</svg>
<div class="a" style="left:1016px;top:232px;width:319px;height:8px;overflow:hidden">
  <div class="t" style="left:28px;top:-7px;font-size:13px;color:#bdbdbd">Элемент</div>
  <div class="t" style="left:118px;top:-7px;font-size:13px;color:#eee;-webkit-text-stroke:0.45px currentColor">p</div>
</div>
<div class="a" style="left:1040px;top:258px;width:268px;height:23px;background:#3a3a3a;border-bottom:1px solid #555"></div>
<div class="t" style="left:1044px;top:263px;font-size:12px;color:#a8a8a8">ID</div>
<div class="a" style="left:1332px;top:271px;width:3px;height:215px;background:#6b6b6b"></div>
<div class="a" style="left:1016px;top:317px;width:316px;height:1px;background:#333"></div>
<div class="t" style="left:1032px;top:328px;font-size:12px;color:#b8b8b8;-webkit-text-stroke:0.45px currentColor">Положение и размер</div>
<svg style="left:1303px;top:331px" width="11" height="7"><path d="M1 6 L5.5 1.5 L10 6" fill="none" stroke="#c0c0c0" stroke-width="1.4"/></svg>

<div class="a" style="left:1040px;top:362px;width:126px;height:23px;background:#3a3a3a;border-bottom:1px solid #555"></div>
<div class="a" style="left:1183px;top:362px;width:126px;height:23px;background:#3a3a3a;border-bottom:1px solid #555"></div>
<div class="a" style="left:1040px;top:405px;width:126px;height:23px;background:#3a3a3a;border-bottom:1px solid #555"></div>
<div class="a" style="left:1183px;top:405px;width:126px;height:23px;background:#3a3a3a;border-bottom:1px solid #555"></div>
<svg style="left:1043px;top:367px" width="14" height="12"><rect x="0.5" y="1" width="2.5" height="10" fill="#d0d0d0"/><rect x="5" y="1.5" width="6.5" height="9" fill="none" stroke="#d0d0d0" stroke-width="1"/></svg>
<div class="t" style="left:1063px;top:367.5px;font-size:12px;color:#f0f0f0;-webkit-text-stroke:0.45px currentColor">81</div>
<div class="t" style="left:1147px;top:367.5px;font-size:12px;color:#9a9a9a">px</div>
<svg style="left:1188px;top:367px" width="12" height="13"><rect x="0.5" y="0" width="10" height="3" fill="#d0d0d0"/><rect x="1" y="5" width="9" height="7" fill="none" stroke="#d0d0d0" stroke-width="1"/></svg>
<div class="t" style="left:1206px;top:367.5px;font-size:12px;color:#f0f0f0;-webkit-text-stroke:0.45px currentColor">159</div>
<div class="t" style="left:1290px;top:367.5px;font-size:12px;color:#9a9a9a">px</div>
<div class="t" style="left:1044px;top:410.5px;font-size:12px;color:#c8c8c8">Ш</div>
<div class="t" style="left:1063px;top:410.5px;font-size:12px;color:#f0f0f0;-webkit-text-stroke:0.45px currentColor">0</div>
<div class="t" style="left:1147px;top:410.5px;font-size:12px;color:#9a9a9a">px</div>
<svg style="left:1168px;top:413px" width="13" height="8"><rect x="0.7" y="0.7" width="11" height="6" rx="3" fill="none" stroke="#c8c8c8" stroke-width="1.2"/></svg>
<div class="t" style="left:1189px;top:410.5px;font-size:12px;color:#c8c8c8;-webkit-text-stroke:0.45px currentColor">В</div>
<div class="t" style="left:1206px;top:410.5px;font-size:12px;color:#f0f0f0;-webkit-text-stroke:0.45px currentColor">0</div>
<div class="t" style="left:1290px;top:410.5px;font-size:12px;color:#9a9a9a">px</div>
<svg style="left:0;top:0" width="1335" height="480" fill="#cfcfcf"><rect x="1043.1" y="452.8" width="1.3" height="1.3"/><rect x="1043.1" y="456.1" width="1.3" height="1.3"/><rect x="1043.1" y="459.4" width="1.3" height="1.3"/><rect x="1043.1" y="462.7" width="1.3" height="1.3"/><rect x="1043.1" y="466.0" width="1.3" height="1.3"/><rect x="1046.4" y="452.8" width="1.3" height="1.3"/><rect x="1046.4" y="466.0" width="1.3" height="1.3"/><rect x="1049.7" y="452.8" width="1.3" height="1.3"/><rect x="1049.7" y="466.0" width="1.3" height="1.3"/><rect x="1053.0" y="452.8" width="1.3" height="1.3"/><rect x="1053.0" y="466.0" width="1.3" height="1.3"/><rect x="1056.3" y="452.8" width="1.3" height="1.3"/><rect x="1056.3" y="466.0" width="1.3" height="1.3"/><rect x="1059.6" y="452.8" width="1.3" height="1.3"/><rect x="1059.6" y="456.1" width="1.3" height="1.3"/><rect x="1059.6" y="459.4" width="1.3" height="1.3"/><rect x="1059.6" y="462.7" width="1.3" height="1.3"/><rect x="1059.6" y="466.0" width="1.3" height="1.3"/><path d="M1052 455.7 L1053.6 457.7 L1050.4 457.7 Z M1052 464.3 L1053.6 462.3 L1050.4 462.3 Z M1047 460 L1049 458.4 L1049 461.6 Z M1057 460 L1055 458.4 L1055 461.6 Z"/></svg>
<div class="t" style="left:1070px;top:453.5px;font-size:12px;color:#c0c0c0">В процентах</div>
<div class="a" style="left:1016px;top:506px;width:316px;height:1px;background:#333"></div>
<div class="t" style="left:1032px;top:517px;font-size:12px;color:#b8b8b8;-webkit-text-stroke:0.45px currentColor">Преобразование, вращение и масштаб</div>
<svg style="left:1303px;top:520px" width="11" height="7"><path d="M1 6 L5.5 1.5 L10 6" fill="none" stroke="#c0c0c0" stroke-width="1.4"/></svg>
<svg style="left:1047px;top:557px" width="20" height="60">
  <circle cx="9.75" cy="9.75" r="7.2" fill="none" stroke="#d8d8d8" stroke-width="1.9"/>
  <circle cx="9.75" cy="49.75" r="7.2" fill="none" stroke="#f4b400" stroke-width="1.9"/>
  <circle cx="9.75" cy="49.75" r="4.2" fill="#f4b400"/>
</svg>
<div class="t" style="left:1075px;top:560.8px;font-size:12px;color:#cfcfcf">Коррекция</div>
<div class="t" style="left:1075px;top:600.8px;font-size:12px;color:#cfcfcf;letter-spacing:0.1px">Абсолютное значение</div>
<div class="a" style="left:1044px;top:641px;width:76px;height:23px;background:#3a3a3a;border-bottom:1px solid #555"></div>
<div class="t" style="left:1049px;top:646.8px;font-size:12px;color:#c8c8c8">X</div>
<div class="t" style="left:1066px;top:646.8px;font-size:12px;color:#f0f0f0;-webkit-text-stroke:0.45px currentColor">70</div>
<div class="t" style="left:1102px;top:646.8px;font-size:12px;color:#9a9a9a">px</div>
<div class="a" style="left:1138px;top:641px;width:76px;height:23px;background:#3a3a3a;border-bottom:1px solid #555"></div>
<div class="t" style="left:1143px;top:646.8px;font-size:12px;color:#c8c8c8">Y</div>
<div class="t" style="left:1160px;top:646.8px;font-size:12px;color:#f0f0f0;-webkit-text-stroke:0.45px currentColor">-21</div>
<div class="t" style="left:1196px;top:646.8px;font-size:12px;color:#9a9a9a">px</div>
<div class="a" style="left:1233px;top:641px;width:76px;height:23px;background:#3a3a3a;border-bottom:1px solid #555"></div>
<div class="t" style="left:1238px;top:646.8px;font-size:12px;color:#c8c8c8">Z</div>
<div class="t" style="left:1255px;top:646.8px;font-size:12px;color:#f0f0f0;-webkit-text-stroke:0.45px currentColor">0</div>
<div class="t" style="left:1291px;top:646.8px;font-size:12px;color:#9a9a9a">px</div>
<div class="a" style="left:1044px;top:684px;width:76px;height:23px;background:#3a3a3a;border-bottom:1px solid #555"></div>
<div class="t" style="left:1049px;top:689.8px;font-size:12px;color:#c8c8c8">X</div>
<div class="t" style="left:1066px;top:689.8px;font-size:12px;color:#f0f0f0;-webkit-text-stroke:0.45px currentColor">0</div>
<div class="t" style="left:1111px;top:687px;font-size:10px;color:#bdbdbd">°</div>
<div class="a" style="left:1138px;top:684px;width:76px;height:23px;background:#3a3a3a;border-bottom:1px solid #555"></div>
<div class="t" style="left:1143px;top:689.8px;font-size:12px;color:#c8c8c8">Y</div>
<div class="t" style="left:1160px;top:689.8px;font-size:12px;color:#f0f0f0;-webkit-text-stroke:0.45px currentColor">0</div>
<div class="t" style="left:1205px;top:687px;font-size:10px;color:#bdbdbd">°</div>
<div class="a" style="left:1233px;top:684px;width:76px;height:23px;background:#3a3a3a;border-bottom:1px solid #555"></div>
<div class="t" style="left:1238px;top:689.8px;font-size:12px;color:#c8c8c8">Z</div>
<div class="t" style="left:1255px;top:689.8px;font-size:12px;color:#f0f0f0;-webkit-text-stroke:0.45px currentColor">0</div>
<div class="t" style="left:1300px;top:687px;font-size:10px;color:#bdbdbd">°</div>
<div class="a" style="left:1044px;top:727px;width:76px;height:23px;background:#3a3a3a;border-bottom:1px solid #555"></div>
<div class="t" style="left:1049px;top:732.8px;font-size:12px;color:#c8c8c8">X</div>
<div class="t" style="left:1066px;top:732.8px;font-size:12px;color:#f0f0f0;-webkit-text-stroke:0.45px currentColor">1</div>
<div class="a" style="left:1138px;top:727px;width:76px;height:23px;background:#3a3a3a;border-bottom:1px solid #555"></div>
<div class="t" style="left:1143px;top:732.8px;font-size:12px;color:#c8c8c8">Y</div>
<div class="t" style="left:1160px;top:732.8px;font-size:12px;color:#f0f0f0;-webkit-text-stroke:0.45px currentColor">1</div>
<div class="a" style="left:1233px;top:727px;width:76px;height:23px;background:#3a3a3a;border-bottom:1px solid #555"></div>
<div class="t" style="left:1238px;top:732.8px;font-size:12px;color:#c8c8c8">Z</div>
<div class="t" style="left:1255px;top:732.8px;font-size:12px;color:#f0f0f0;-webkit-text-stroke:0.45px currentColor">1</div>
<svg style="left:1027px;top:736px" width="14" height="9"><rect x="0.7" y="0.7" width="11.5" height="6.5" rx="3.2" fill="none" stroke="#c8c8c8" stroke-width="1.2"/></svg>


<!-- ===== ANNOTATIONS ===== -->
<svg style="left:0;top:0" width="1335" height="766" fill="none" stroke="#ff6a00" stroke-linecap="round" stroke-linejoin="round">
  <path d="M15.1 91.8 C17.1 91.0 17.8 91.8 20.9 92.4 C23.9 93.0 31.2 94.0 33.4 95.2 C35.6 96.4 34.1 97.9 34.2 99.7 C34.3 101.5 34.4 104.2 33.9 105.9 C33.4 107.6 32.2 108.3 31.3 110.1 C30.4 111.8 29.2 115.0 28.2 116.4 C27.2 117.8 27.2 118.3 25.1 118.7 C23.0 119.1 18.3 119.4 15.7 119.0 C13.1 118.6 11.4 117.5 9.4 116.4 C7.4 115.4 4.7 115.0 3.7 112.7 C2.8 110.4 2.8 105.4 3.7 102.8 C4.6 100.2 7.0 98.8 8.9 97.0 C10.8 95.2 13.1 92.6 15.1 91.8" stroke-width="3.3"/>
  <path d="M39.4 114.4 C41.3 115.2 44.1 117.3 51.0 119.2 C57.9 121.1 71.0 123.8 81.0 126.0 C91.0 128.2 101.7 130.5 110.9 132.7 C120.1 134.9 126.8 136.9 136.0 139.0 C145.2 141.1 156.0 143.5 166.0 145.4 C176.0 147.3 184.3 148.5 196.0 150.2 C207.7 151.9 223.7 153.3 236.0 155.8 C248.3 158.3 259.3 162.6 270.0 165.0 C280.7 167.4 291.3 168.4 300.0 170.2 C308.7 171.9 315.7 173.6 322.4 175.5 C329.1 177.4 333.3 179.4 340.0 181.9 C346.7 184.4 355.0 188.2 362.5 190.5 C370.0 192.8 377.5 194.1 385.0 195.7 C392.5 197.3 400.5 198.7 407.4 199.9 C414.2 201.1 420.7 202.1 426.1 202.8 C431.5 203.5 434.6 203.8 440.0 204.0 C445.4 204.2 453.7 204.2 458.7 203.9 C463.7 203.6 465.6 202.8 470.0 202.4 C474.4 202.0 478.1 201.7 485.0 201.6 C491.9 201.5 505.6 201.3 511.2 201.6 C516.8 201.8 513.9 201.6 518.7 203.1 C523.5 204.6 534.0 208.5 540.0 210.5 C546.0 212.5 550.0 213.4 555.0 215.0 C560.0 216.6 565.0 218.9 570.0 220.2 C575.0 221.4 576.3 222.1 585.0 222.5 C593.7 222.9 613.2 222.5 622.4 222.8 C631.6 223.1 634.0 223.8 640.0 224.1 C646.0 224.4 652.5 224.8 658.7 224.5 C665.0 224.2 665.6 222.9 677.5 222.6 C689.4 222.2 717.8 222.0 729.9 222.4 C742.0 222.8 744.8 224.2 750.0 225.2 C755.2 226.2 757.6 227.1 761.2 228.2 C764.8 229.3 770.0 231.4 771.7 232.0" stroke-width="3.9"/>
  <path d="M763.4 215.9 Q767 221 768.5 225 Q770 229 771.7 232 Q766 233.8 761 235.5 L754.5 236.5" stroke-width="4.1"/>
  <path d="M538.6 602.1 C542.3 602.0 555.6 602.1 560.6 601.3 C565.6 600.5 566.1 598.6 568.8 597.2 C571.5 595.9 573.9 593.7 576.9 593.2 C579.9 592.7 581.5 592.8 586.7 594.0 C591.9 595.2 601.6 598.0 607.9 600.5 C614.1 603.0 619.6 606.8 624.2 608.7 C628.8 610.6 632.7 609.3 635.7 611.9 C638.7 614.5 640.9 619.7 642.2 624.2 C643.6 628.7 644.1 633.2 643.8 638.9 C643.5 644.6 642.2 652.7 640.6 658.4 C639.0 664.1 637.0 668.7 634.0 673.1 C631.0 677.5 626.7 681.3 622.6 684.6 C618.5 687.9 613.7 690.9 609.6 692.7 C605.5 694.5 602.5 695.1 598.1 695.2 C593.7 695.3 589.1 695.0 583.4 693.5 C577.7 692.0 569.9 688.5 563.9 686.2 C557.9 683.9 552.4 683.0 547.5 679.7 C542.6 676.4 538.2 671.5 534.5 666.6 C530.8 661.7 527.5 655.5 525.5 650.3 C523.5 645.1 522.1 640.2 522.2 635.6 C522.3 631.0 524.2 627.1 526.3 622.5 C528.3 617.9 533.0 610.5 534.5 607.8 C536.0 605.1 535.2 606.5 535.3 606.2" stroke-width="3.5"/>
  <path d="M549 680 L556 682.5 L565 685" stroke-width="4.5"/>
</svg>

<!-- ===== WATERMARK ===== -->
<div class="a" style="left:1138px;top:689px;width:171px;height:62px;background:rgba(168,168,168,0.72)"></div>
<div class="a" style="left:1138px;top:689px;width:172px;height:63px;overflow:hidden"><div class="t" style="left:22.5px;top:-4.5px;font-size:66px;color:#fff;letter-spacing:-2.4px;-webkit-text-stroke:0.8px #fff">dir.by</div></div>

</body></html>
